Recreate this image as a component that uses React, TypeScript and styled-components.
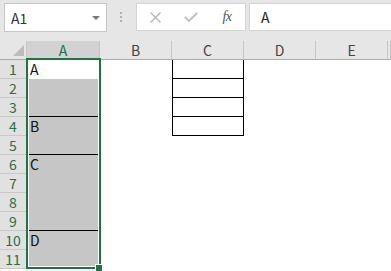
import React from 'react';
import styled, { createGlobalStyle } from 'styled-components';

const Global = createGlobalStyle`
  html, body { margin: 0; padding: 0; background: #fff; overflow: hidden; }
  body { font-family: "Noto Sans CJK SC", "Noto Sans", sans-serif; }
`;

const Window = styled.div`
  width: 391px;
  height: 271px;
  overflow: hidden;
  background: #fff;
`;

const TopBar = styled.div`
  height: 41px;
  box-sizing: border-box;
  padding-top: 3px;
  background: #e6e6e6;
  display: flex;
  align-items: flex-start;
`;

const NameBox = styled.div`
  margin-left: 4px;
  width: 103px;
  height: 29px;
  box-sizing: border-box;
  border: 1px solid #c6c6c6;
  background: #fff;
  display: flex;
  align-items: center;
  justify-content: space-between;
  padding: 0 6px;
  font-size: 14px;
  color: #333;
`;

const Caret = styled.span`
  width: 0;
  height: 0;
  border-left: 4px solid transparent;
  border-right: 4px solid transparent;
  border-top: 4px solid #7a7a7a;
`;

const Grip = styled.div`
  margin-left: 13px;
  margin-top: 9px;
  display: flex;
  flex-direction: column;
  gap: 2px;
`;

const GripDot = styled.span`
  width: 2px;
  height: 2px;
  background: #b0b0b0;
`;

const FxButtons = styled.div`
  margin-left: 14px;
  width: 110px;
  height: 28px;
  box-sizing: border-box;
  border: 1px solid #d4d4d4;
  background: #fff;
  display: flex;
`;

const FxSlot = styled.div`
  width: 36px;
  height: 100%;
  display: flex;
  align-items: center;
  justify-content: center;
`;

const FxLabel = styled.span`
  font-family: "Liberation Serif", "DejaVu Serif", serif;
  font-style: italic;
  font-size: 14px;
  color: #555;
  letter-spacing: -0.5px;
`;

const FormulaInput = styled.div`
  margin-left: 3px;
  flex: 1;
  height: 28px;
  box-sizing: border-box;
  border: 1px solid #d4d4d4;
  border-right: none;
  background: #fff;
  padding-left: 11px;
  display: flex;
  align-items: center;
  font-size: 14px;
  color: #222;
`;

const Sheet = styled.div`
  position: relative;
  display: grid;
  grid-template-columns: 27px 73px 72px 72px 72px 72px 1fr;
  grid-template-rows: 19px repeat(11, 19px);
`;

const Corner = styled.div`
  background: #e6e6e6;
  box-sizing: border-box;
  border-bottom: 1px solid #ababab;
  border-right: 1px solid #c8c8c8;
  position: relative;
  &::after {
    content: '';
    position: absolute;
    right: 2px;
    bottom: 3px;
    width: 0;
    height: 0;
    border-left: 11px solid transparent;
    border-bottom: 11px solid #bcbcbc;
  }
`;

const ColHead = styled.div<{ $sel?: boolean }>`
  background: ${(p) => (p.$sel ? '#d2d2d2' : '#e6e6e6')};
  color: ${(p) => (p.$sel ? '#217346' : '#444')};
  box-sizing: border-box;
  border-bottom: 1px solid #ababab;
  border-right: 1px solid #c6c6c6;
  font-size: 14px;
  display: flex;
  align-items: center;
  justify-content: center;
  line-height: 18px;
`;

const RowHead = styled.div`
  background: #e1e1e1;
  color: #2b6e45;
  box-sizing: border-box;
  border-bottom: 1px solid #c8c8c8;
  border-right: 1px solid #ababab;
  font-size: 14px;
  display: flex;
  align-items: center;
  justify-content: center;
  line-height: 18px;
`;

const ACell = styled.div<{ $active?: boolean; $line?: boolean }>`
  background: ${(p) => (p.$active ? '#fff' : '#c6c6c6')};
  box-sizing: border-box;
  border-bottom: 1px solid ${(p) => (p.$line ? '#000' : 'transparent')};
  font-size: 14px;
  color: #111;
  padding-left: 3px;
  display: flex;
  align-items: flex-end;
  line-height: 18px;
`;

const BoxCell = styled.div`
  box-sizing: border-box;
  border-left: 1px solid #000;
  border-right: 1px solid #000;
  border-bottom: 1px solid #000;
`;

const Blank = styled.div``;

const Selection = styled.div`
  position: absolute;
  left: 26px;
  top: 17px;
  width: 75px;
  height: 211px;
  box-sizing: border-box;
  border: 2px solid #217346;
  box-shadow: inset 0 0 0 1px #fff;
  pointer-events: none;
`;

const FillHandle = styled.div`
  position: absolute;
  left: 95px;
  top: 223px;
  width: 8px;
  height: 8px;
  box-sizing: border-box;
  border: 1px solid #fff;
  background: #217346;
`;

const labels: Record<number, string> = { 1: 'A', 4: 'B', 6: 'C', 10: 'D' };
const lines = new Set([3, 5, 9]);

export default function App() {
  const rows = Array.from({ length: 11 }, (_, i) => i + 1);
  return (
    <Window>
      <Global />
      <TopBar>
        <NameBox>
          <span>A1</span>
          <Caret />
        </NameBox>
        <Grip>
          <GripDot />
          <GripDot />
          <GripDot />
        </Grip>
        <FxButtons>
          <FxSlot>
            <svg width="11" height="11" viewBox="0 0 11 11">
              <path d="M0.5 0.5 L10.5 10.5 M10.5 0.5 L0.5 10.5" stroke="#b4b4b4" strokeWidth="1.2" fill="none" />
            </svg>
          </FxSlot>
          <FxSlot>
            <svg width="14" height="10" viewBox="0 0 14 10">
              <path d="M0.8 5 L5 9 L13.2 0.8" stroke="#bdbdbd" strokeWidth="1.8" fill="none" />
            </svg>
          </FxSlot>
          <FxSlot>
            <FxLabel>fx</FxLabel>
          </FxSlot>
        </FxButtons>
        <FormulaInput>A</FormulaInput>
      </TopBar>
      <Sheet>
        <Corner />
        <ColHead $sel>A</ColHead>
        <ColHead>B</ColHead>
        <ColHead>C</ColHead>
        <ColHead>D</ColHead>
        <ColHead>E</ColHead>
        <ColHead />
        {rows.map((r) => (
          <React.Fragment key={r}>
            <RowHead>{r}</RowHead>
            <ACell $active={r === 1} $line={lines.has(r)}>
              {labels[r] ?? ''}
            </ACell>
            <Blank />
            {r <= 4 ? <BoxCell /> : <Blank />}
            <Blank />
            <Blank />
            <Blank />
          </React.Fragment>
        ))}
        <Selection />
        <FillHandle />
      </Sheet>
    </Window>
  );
}
